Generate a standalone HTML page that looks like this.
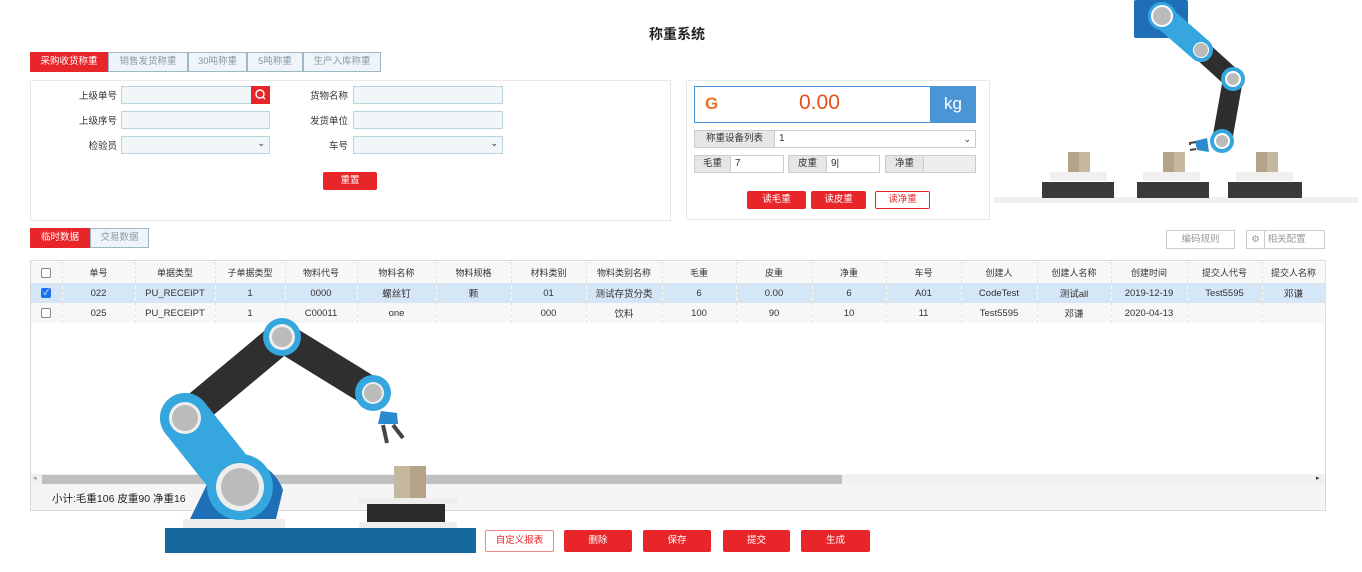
<!DOCTYPE html>
<html><head><meta charset="utf-8"><style>
*{margin:0;padding:0;box-sizing:border-box}
body{width:1362px;height:572px;background:#fff;font-family:"Liberation Sans","Noto Sans CJK SC",sans-serif;font-size:10px;color:#333;position:relative;overflow:hidden}
.a{position:absolute}
.tab{position:absolute;top:52px;height:20px;border:1px solid #9fb6c4;background:#eef4f7;color:#8a9aa6;text-align:center;line-height:18px;font-size:9.5px}
.tab.on{background:#e8262a;color:#fff;border-color:#e8262a}
.lbl{position:absolute;font-size:9.5px;color:#333;text-align:right;width:60px}
.inp{position:absolute;height:18px;border:1px solid #b9d3df;background:#f1f6f8}
.btn{position:absolute;background:#e8262a;color:#fff;text-align:center;font-size:9.5px;border-radius:2px}
.obtn{position:absolute;background:#fff;color:#e8262a;border:1px solid #e8262a;text-align:center;font-size:9.5px;border-radius:2px}
.gl{position:absolute;background:#e6e6e6;border:1px solid #ccc;text-align:center;font-size:9.5px;line-height:16px}
.wi{position:absolute;background:#fff;border:1px solid #ccc;font-size:10px;padding-left:4px;line-height:16px}
table{border-collapse:collapse;position:absolute;left:31px;top:262px;table-layout:fixed}
td{height:20px;text-align:center;font-size:9.5px;border-right:1px dashed #e4e4e4;white-space:nowrap;overflow:hidden}
tr.h td{font-size:9px;height:21px}
tr.s td{background:#d5e7f7}
tr.r td{background:#f7f7f7}
.cb{display:inline-block;width:10px;height:10px;border:1px solid #888;border-radius:2px;background:#fff;vertical-align:middle;position:relative}
.cb.c{background:#1a73e8;border-color:#1a73e8;color:#fff;font-size:8px;line-height:8px}
</style></head><body>
<div class="a" style="left:0;top:24px;width:1354px;text-align:center;font-size:14px;font-weight:bold;color:#222">称重系统</div>

<div class="tab on" style="left:30px;width:78px">采购收货称重</div>
<div class="tab" style="left:108px;width:80px">销售发货称重</div>
<div class="tab" style="left:188px;width:59px">30吨称重</div>
<div class="tab" style="left:247px;width:56px">5吨称重</div>
<div class="tab" style="left:303px;width:78px">生产入库称重</div>

<div class="a" style="left:30px;top:80px;width:641px;height:141px;border:1px solid #e8e8e8"></div>
<div class="lbl" style="left:57px;top:88px">上级单号</div>
<div class="inp" style="left:121px;top:86px;width:131px"></div>
<div class="a" style="left:251px;top:86px;width:19px;height:18px;background:#e8262a"><svg width="19" height="18"><circle cx="9" cy="8" r="4" stroke="#fff" stroke-width="1.4" fill="none"/><line x1="12" y1="11" x2="14" y2="13" stroke="#fff" stroke-width="1.4"/></svg></div>
<div class="lbl" style="left:57px;top:113px">上级序号</div>
<div class="inp" style="left:121px;top:111px;width:149px"></div>
<div class="lbl" style="left:57px;top:138px">检验员</div>
<div class="inp" style="left:121px;top:136px;width:149px"><span class="a" style="right:4px;top:1px;font-size:9px;color:#222">⌄</span></div>
<div class="lbl" style="left:288px;top:88px">货物名称</div>
<div class="inp" style="left:353px;top:86px;width:150px"></div>
<div class="lbl" style="left:288px;top:113px">发货单位</div>
<div class="inp" style="left:353px;top:111px;width:150px"></div>
<div class="lbl" style="left:288px;top:138px">车号</div>
<div class="inp" style="left:353px;top:136px;width:150px"><span class="a" style="right:4px;top:1px;font-size:9px;color:#222">⌄</span></div>
<div class="btn" style="left:323px;top:172px;width:54px;height:18px;line-height:18px">重置</div>

<div class="a" style="left:686px;top:80px;width:304px;height:140px;border:1px solid #e8e8e8"></div>
<div class="a" style="left:694px;top:86px;width:282px;height:37px;border:1px solid #4a95d6"></div>
<div class="a" style="left:705px;top:94px;color:#e8722a;font-size:17px;font-weight:bold">G</div>
<div class="a" style="left:799px;top:91px;color:#e8501a;font-size:21px">0.00</div>
<div class="a" style="left:930px;top:86px;width:46px;height:37px;background:#4a95d6;color:#fff;font-size:17px;text-align:center;line-height:36px">kg</div>
<div class="gl" style="left:694px;top:130px;width:81px;height:18px">称重设备列表</div>
<div class="wi" style="left:774px;top:130px;width:202px;height:18px">1<span class="a" style="right:4px;top:0;font-size:9px">⌄</span></div>
<div class="gl" style="left:694px;top:155px;width:37px;height:18px">毛重</div>
<div class="wi" style="left:730px;top:155px;width:54px;height:18px">7</div>
<div class="gl" style="left:788px;top:155px;width:39px;height:18px">皮重</div>
<div class="wi" style="left:826px;top:155px;width:54px;height:18px">9|</div>
<div class="gl" style="left:885px;top:155px;width:39px;height:18px">净重</div>
<div class="gl" style="left:923px;top:155px;width:53px;height:18px;background:#eee"></div>
<div class="btn" style="left:747px;top:191px;width:59px;height:18px;line-height:18px">读毛重</div>
<div class="btn" style="left:811px;top:191px;width:55px;height:18px;line-height:18px">读皮重</div>
<div class="obtn" style="left:875px;top:191px;width:55px;height:18px;line-height:16px">读净重</div>

<svg class="a" style="left:0;top:0" width="1362" height="572">
<rect x="993" y="197" width="365" height="6" fill="#f0f0f0"/>
<g fill="#f0f0f0"><rect x="1050" y="172" width="57" height="9"/><rect x="1143" y="172" width="57" height="9"/><rect x="1236" y="172" width="57" height="9"/></g>
<g fill="#3a3a3a"><rect x="1042" y="182" width="72" height="16"/><rect x="1137" y="182" width="72" height="16"/><rect x="1228" y="182" width="74" height="16"/></g>
<g><rect x="1068" y="152" width="22" height="20" fill="#c6b89e"/><rect x="1068" y="152" width="11" height="20" fill="#b4a387"/>
<rect x="1163" y="152" width="22" height="20" fill="#c6b89e"/><rect x="1163" y="152" width="11" height="20" fill="#b4a387"/>
<rect x="1256" y="152" width="22" height="20" fill="#c6b89e"/><rect x="1256" y="152" width="11" height="20" fill="#b4a387"/></g>
<rect x="1134" y="0" width="54" height="38" rx="2" fill="#1f6fb8"/>
<line x1="1201" y1="50" x2="1233" y2="79" stroke="#2e2e2e" stroke-width="20"/>
<line x1="1233" y1="79" x2="1222" y2="141" stroke="#2e2e2e" stroke-width="20"/>
<line x1="1162" y1="16" x2="1201" y2="50" stroke="#35a6de" stroke-width="24" stroke-linecap="round"/>
<path d="M1195 141 L1207 138 L1209 152 L1197 150Z" fill="#2a8ad0"/><path d="M1196 142 L1190 143 L1190 145 M1196 149 L1190 150" stroke="#444" stroke-width="2" fill="none"/>
<g><circle cx="1162" cy="16" r="14" fill="#35a6de"/><circle cx="1162" cy="16" r="11" fill="#fff"/><circle cx="1162" cy="16" r="9" fill="#bbb"/>
<circle cx="1201" cy="50" r="11" fill="#35a6de"/><circle cx="1201" cy="50" r="8" fill="#fff"/><circle cx="1201" cy="50" r="7" fill="#bbb"/>
<circle cx="1233" cy="79" r="12" fill="#35a6de"/><circle cx="1233" cy="79" r="8" fill="#fff"/><circle cx="1233" cy="79" r="6" fill="#bbb"/>
<circle cx="1222" cy="141" r="12" fill="#35a6de"/><circle cx="1222" cy="141" r="8" fill="#fff"/><circle cx="1222" cy="141" r="6" fill="#bbb"/></g>
</svg>

<div class="tab on" style="left:30px;top:228px;width:60px">临时数据</div>
<div class="tab" style="left:90px;top:228px;width:59px">交易数据</div>
<div class="a" style="left:1166px;top:230px;width:69px;height:19px;border:1px solid #ccc;color:#999;text-align:center;line-height:17px;font-size:9.5px">编码规则</div>
<div class="a" style="left:1246px;top:230px;width:79px;height:19px;border:1px solid #ccc;color:#999;font-size:9.5px;line-height:17px"><span style="display:inline-block;width:18px;border-right:1px solid #ccc;text-align:center">⚙</span> 相关配置</div>

<div class="a" style="left:30px;top:260px;width:1296px;height:251px;border:1px solid #d8d8d8"></div>
<table>
<colgroup><col style="width:31px"><col style="width:73px"><col style="width:80px"><col style="width:70px"><col style="width:72px"><col style="width:79px"><col style="width:75px"><col style="width:75px"><col style="width:76px"><col style="width:74px"><col style="width:76px"><col style="width:74px"><col style="width:75px"><col style="width:76px"><col style="width:74px"><col style="width:76px"><col style="width:75px"><col style="width:63px"></colgroup>
<tr class="h r"><td><span class="cb"></span></td><td>单号</td><td>单据类型</td><td>子单据类型</td><td>物料代号</td><td>物料名称</td><td>物料规格</td><td>材料类别</td><td>物料类别名称</td><td>毛重</td><td>皮重</td><td>净重</td><td>车号</td><td>创建人</td><td>创建人名称</td><td>创建时间</td><td>提交人代号</td><td>提交人名称</td></tr>
<tr class="s"><td><span class="cb c">✓</span></td><td>022</td><td>PU_RECEIPT</td><td>1</td><td>0000</td><td>螺丝钉</td><td>颗</td><td>01</td><td>测试存货分类</td><td>6</td><td>0.00</td><td>6</td><td>A01</td><td>CodeTest</td><td>测试all</td><td>2019-12-19</td><td>Test5595</td><td>邓谦</td></tr>
<tr class="r"><td><span class="cb"></span></td><td>025</td><td>PU_RECEIPT</td><td>1</td><td>C00011</td><td>one</td><td></td><td>000</td><td>饮料</td><td>100</td><td>90</td><td>10</td><td>11</td><td>Test5595</td><td>邓谦</td><td>2020-04-13</td><td></td><td></td></tr>
</table>
<div class="a" style="left:31px;top:474px;width:1294px;height:11px;background:#f0f0f0"></div>
<div class="a" style="left:42px;top:475px;width:800px;height:9px;background:#c0c0c0"></div>
<div class="a" style="left:33px;top:474px;font-size:7px;color:#999">◂</div>
<div class="a" style="left:1316px;top:474px;font-size:7px;color:#333">▸</div>
<div class="a" style="left:31px;top:485px;width:1294px;height:25px;background:#f5f5f5"></div>
<div class="a" style="left:52px;top:491px;font-size:10.5px;color:#222">小计:毛重106 皮重90 净重16</div>

<svg class="a" style="left:0;top:0" width="1362" height="572">
<rect x="165" y="528" width="311" height="25" fill="#15689e"/>
<rect x="183" y="519" width="102" height="9" fill="#eee"/>
<path d="M190 519 L215 468 A45 45 0 0 1 283 490 L276 519Z" fill="#1f6fb8"/>
<line x1="185" y1="418" x2="282" y2="337" stroke="#2f2f2f" stroke-width="32"/>
<line x1="282" y1="337" x2="373" y2="393" stroke="#2f2f2f" stroke-width="30"/>
<line x1="185" y1="418" x2="240" y2="487" stroke="#35a6de" stroke-width="50" stroke-linecap="round"/>
<path d="M381 411 L397 413 L398 424 L378 424Z" fill="#2a8ad0"/>
<path d="M383 425 L387 443 M393 425 L403 438" stroke="#444" stroke-width="4"/>
<circle cx="240" cy="487" r="33" fill="#35a6de"/><circle cx="240" cy="487" r="24" fill="#eee"/><circle cx="240" cy="487" r="19" fill="#bbb"/>
<circle cx="185" cy="418" r="25" fill="#35a6de"/><circle cx="185" cy="418" r="16" fill="#eee"/><circle cx="185" cy="418" r="13" fill="#bbb"/>
<circle cx="282" cy="337" r="19" fill="#35a6de"/><circle cx="282" cy="337" r="13" fill="#eee"/><circle cx="282" cy="337" r="10" fill="#bbb"/>
<circle cx="373" cy="393" r="18" fill="#35a6de"/><circle cx="373" cy="393" r="11" fill="#eee"/><circle cx="373" cy="393" r="9" fill="#bbb"/>
<rect x="394" y="466" width="32" height="32" fill="#b4a387"/><rect x="394" y="466" width="16" height="32" fill="#c6b89e"/>
<rect x="359" y="498" width="98" height="6" fill="#eee"/>
<rect x="367" y="504" width="78" height="18" fill="#2b2b2b"/>
<rect x="359" y="522" width="98" height="6" fill="#eee"/>
</svg>

<div class="obtn" style="left:485px;top:530px;width:69px;height:22px;line-height:20px;border-color:#e88">自定义报表</div>
<div class="btn" style="left:564px;top:530px;width:68px;height:22px;line-height:22px">删除</div>
<div class="btn" style="left:643px;top:530px;width:68px;height:22px;line-height:22px">保存</div>
<div class="btn" style="left:723px;top:530px;width:67px;height:22px;line-height:22px">提交</div>
<div class="btn" style="left:801px;top:530px;width:69px;height:22px;line-height:22px">生成</div>
</body></html>
